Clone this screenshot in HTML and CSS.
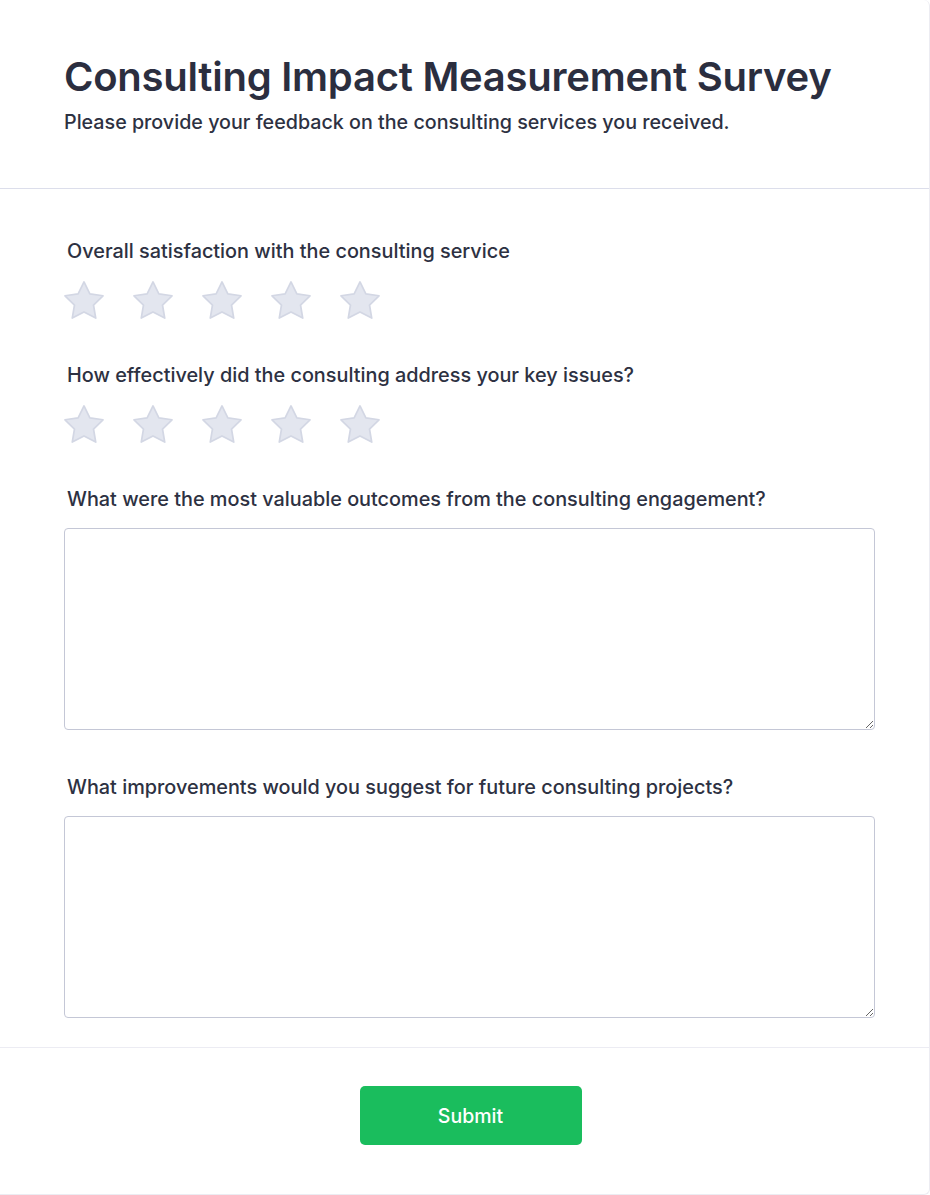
FILE: index.html
```html
<!DOCTYPE html>
<html lang="en">
<head>
<meta charset="utf-8">
<title>Consulting Impact Measurement Survey</title>
<link rel="stylesheet" href="styles.css">
</head>
<body>
<div class="card">
  <header class="header">
    <h1 class="title">Consulting Impact Measurement Survey</h1>
    <p class="subtitle">Please provide your feedback on the consulting services you received.</p>
  </header>
  <form class="body">
    <div class="field">
      <label class="label">Overall satisfaction with the consulting service</label>
      <div class="stars">
        <svg class="star" viewBox="1.5 1.5 21 20"><path d="M12 2l3.09 6.26L22 9.27l-5 4.87 1.18 6.88L12 17.77l-6.18 3.25L7 14.14 2 9.27l6.91-1.01L12 2z"/></svg>
        <svg class="star" viewBox="1.5 1.5 21 20"><path d="M12 2l3.09 6.26L22 9.27l-5 4.87 1.18 6.88L12 17.77l-6.18 3.25L7 14.14 2 9.27l6.91-1.01L12 2z"/></svg>
        <svg class="star" viewBox="1.5 1.5 21 20"><path d="M12 2l3.09 6.26L22 9.27l-5 4.87 1.18 6.88L12 17.77l-6.18 3.25L7 14.14 2 9.27l6.91-1.01L12 2z"/></svg>
        <svg class="star" viewBox="1.5 1.5 21 20"><path d="M12 2l3.09 6.26L22 9.27l-5 4.87 1.18 6.88L12 17.77l-6.18 3.25L7 14.14 2 9.27l6.91-1.01L12 2z"/></svg>
        <svg class="star" viewBox="1.5 1.5 21 20"><path d="M12 2l3.09 6.26L22 9.27l-5 4.87 1.18 6.88L12 17.77l-6.18 3.25L7 14.14 2 9.27l6.91-1.01L12 2z"/></svg>
      </div>
    </div>
    <div class="field">
      <label class="label">How effectively did the consulting address your key issues?</label>
      <div class="stars">
        <svg class="star" viewBox="1.5 1.5 21 20"><path d="M12 2l3.09 6.26L22 9.27l-5 4.87 1.18 6.88L12 17.77l-6.18 3.25L7 14.14 2 9.27l6.91-1.01L12 2z"/></svg>
        <svg class="star" viewBox="1.5 1.5 21 20"><path d="M12 2l3.09 6.26L22 9.27l-5 4.87 1.18 6.88L12 17.77l-6.18 3.25L7 14.14 2 9.27l6.91-1.01L12 2z"/></svg>
        <svg class="star" viewBox="1.5 1.5 21 20"><path d="M12 2l3.09 6.26L22 9.27l-5 4.87 1.18 6.88L12 17.77l-6.18 3.25L7 14.14 2 9.27l6.91-1.01L12 2z"/></svg>
        <svg class="star" viewBox="1.5 1.5 21 20"><path d="M12 2l3.09 6.26L22 9.27l-5 4.87 1.18 6.88L12 17.77l-6.18 3.25L7 14.14 2 9.27l6.91-1.01L12 2z"/></svg>
        <svg class="star" viewBox="1.5 1.5 21 20"><path d="M12 2l3.09 6.26L22 9.27l-5 4.87 1.18 6.88L12 17.77l-6.18 3.25L7 14.14 2 9.27l6.91-1.01L12 2z"/></svg>
      </div>
    </div>
    <div class="field">
      <label class="label">What were the most valuable outcomes from the consulting engagement?</label>
      <textarea class="textarea"></textarea>
    </div>
    <div class="field">
      <label class="label">What improvements would you suggest for future consulting projects?</label>
      <textarea class="textarea"></textarea>
    </div>
  </form>
  <footer class="footer">
    <button class="submit" type="button">Submit</button>
  </footer>
</div>
</body>
</html>
```

FILE: styles.css
```css
* { box-sizing: border-box; }
html, body {
  margin: 0;
  padding: 0;
  background: #ffffff;
}
body {
  font-family: Inter, "Noto Sans", sans-serif;
  color: #2d3142;
}
.card {
  width: 930px;
  height: 1195px;
  background: #ffffff;
  border-right: 1px solid #ececf2;
  border-bottom: 1px solid #ececf2;
  border-top-right-radius: 6px;
  border-bottom-right-radius: 6px;
  display: flex;
  flex-direction: column;
}
.header {
  padding: 53px 64px 0 64px;
  height: 189px;
  border-bottom: 1px solid #dcdeeb;
}
.title {
  margin: 0;
  font-size: 40px;
  line-height: 48px;
  font-weight: 600;
  letter-spacing: -0.25px;
  color: #2b2e3f;
}
.subtitle {
  margin: 8px 0 0 0;
  font-size: 19.7px;
  line-height: 27px;
  font-weight: 500;
  color: #2d3142;
}
.body {
  padding: 47px 55px 0 64px;
  height: 859px;
  border-bottom: 1px solid #ececf3;
  display: flex;
  flex-direction: column;
}
.field {
  display: flex;
  flex-direction: column;
  margin-bottom: 41px;
}
.label {
  padding-left: 3px;
  font-size: 19.85px;
  line-height: 30px;
  font-weight: 500;
  color: #2d3142;
  margin-bottom: 15px;
}
.stars {
  display: flex;
  gap: 29px;
}
.star {
  width: 40px;
  height: 38px;
  display: block;
}
.star path {
  fill: #e3e6ef;
  stroke: #d3d7e4;
  stroke-width: 0.9;
  stroke-linejoin: round;
}
.field:nth-child(3) .label,
.field:nth-child(4) .label { margin-bottom: 14px; }
.field:nth-child(3) { margin-bottom: 42px; }
.field:nth-child(4) { margin-bottom: 0; }
.textarea {
  display: block;
  width: 811px;
  height: 202px;
  border: 1px solid #c4c7d6;
  border-radius: 4px;
  background: #ffffff;
  font-family: Inter, sans-serif;
  font-size: 16px;
  padding: 8px;
  resize: vertical;
}
.footer {
  flex: 1;
  display: flex;
  justify-content: center;
  padding-top: 38px;
}
.submit {
  width: 222px;
  height: 59px;
  background: #1abd5d;
  color: #ffffff;
  border: none;
  border-radius: 5px;
  font-family: Inter, sans-serif;
  font-size: 19.5px;
  font-weight: 500;
  cursor: pointer;
  margin-left: 12px;
}
```
